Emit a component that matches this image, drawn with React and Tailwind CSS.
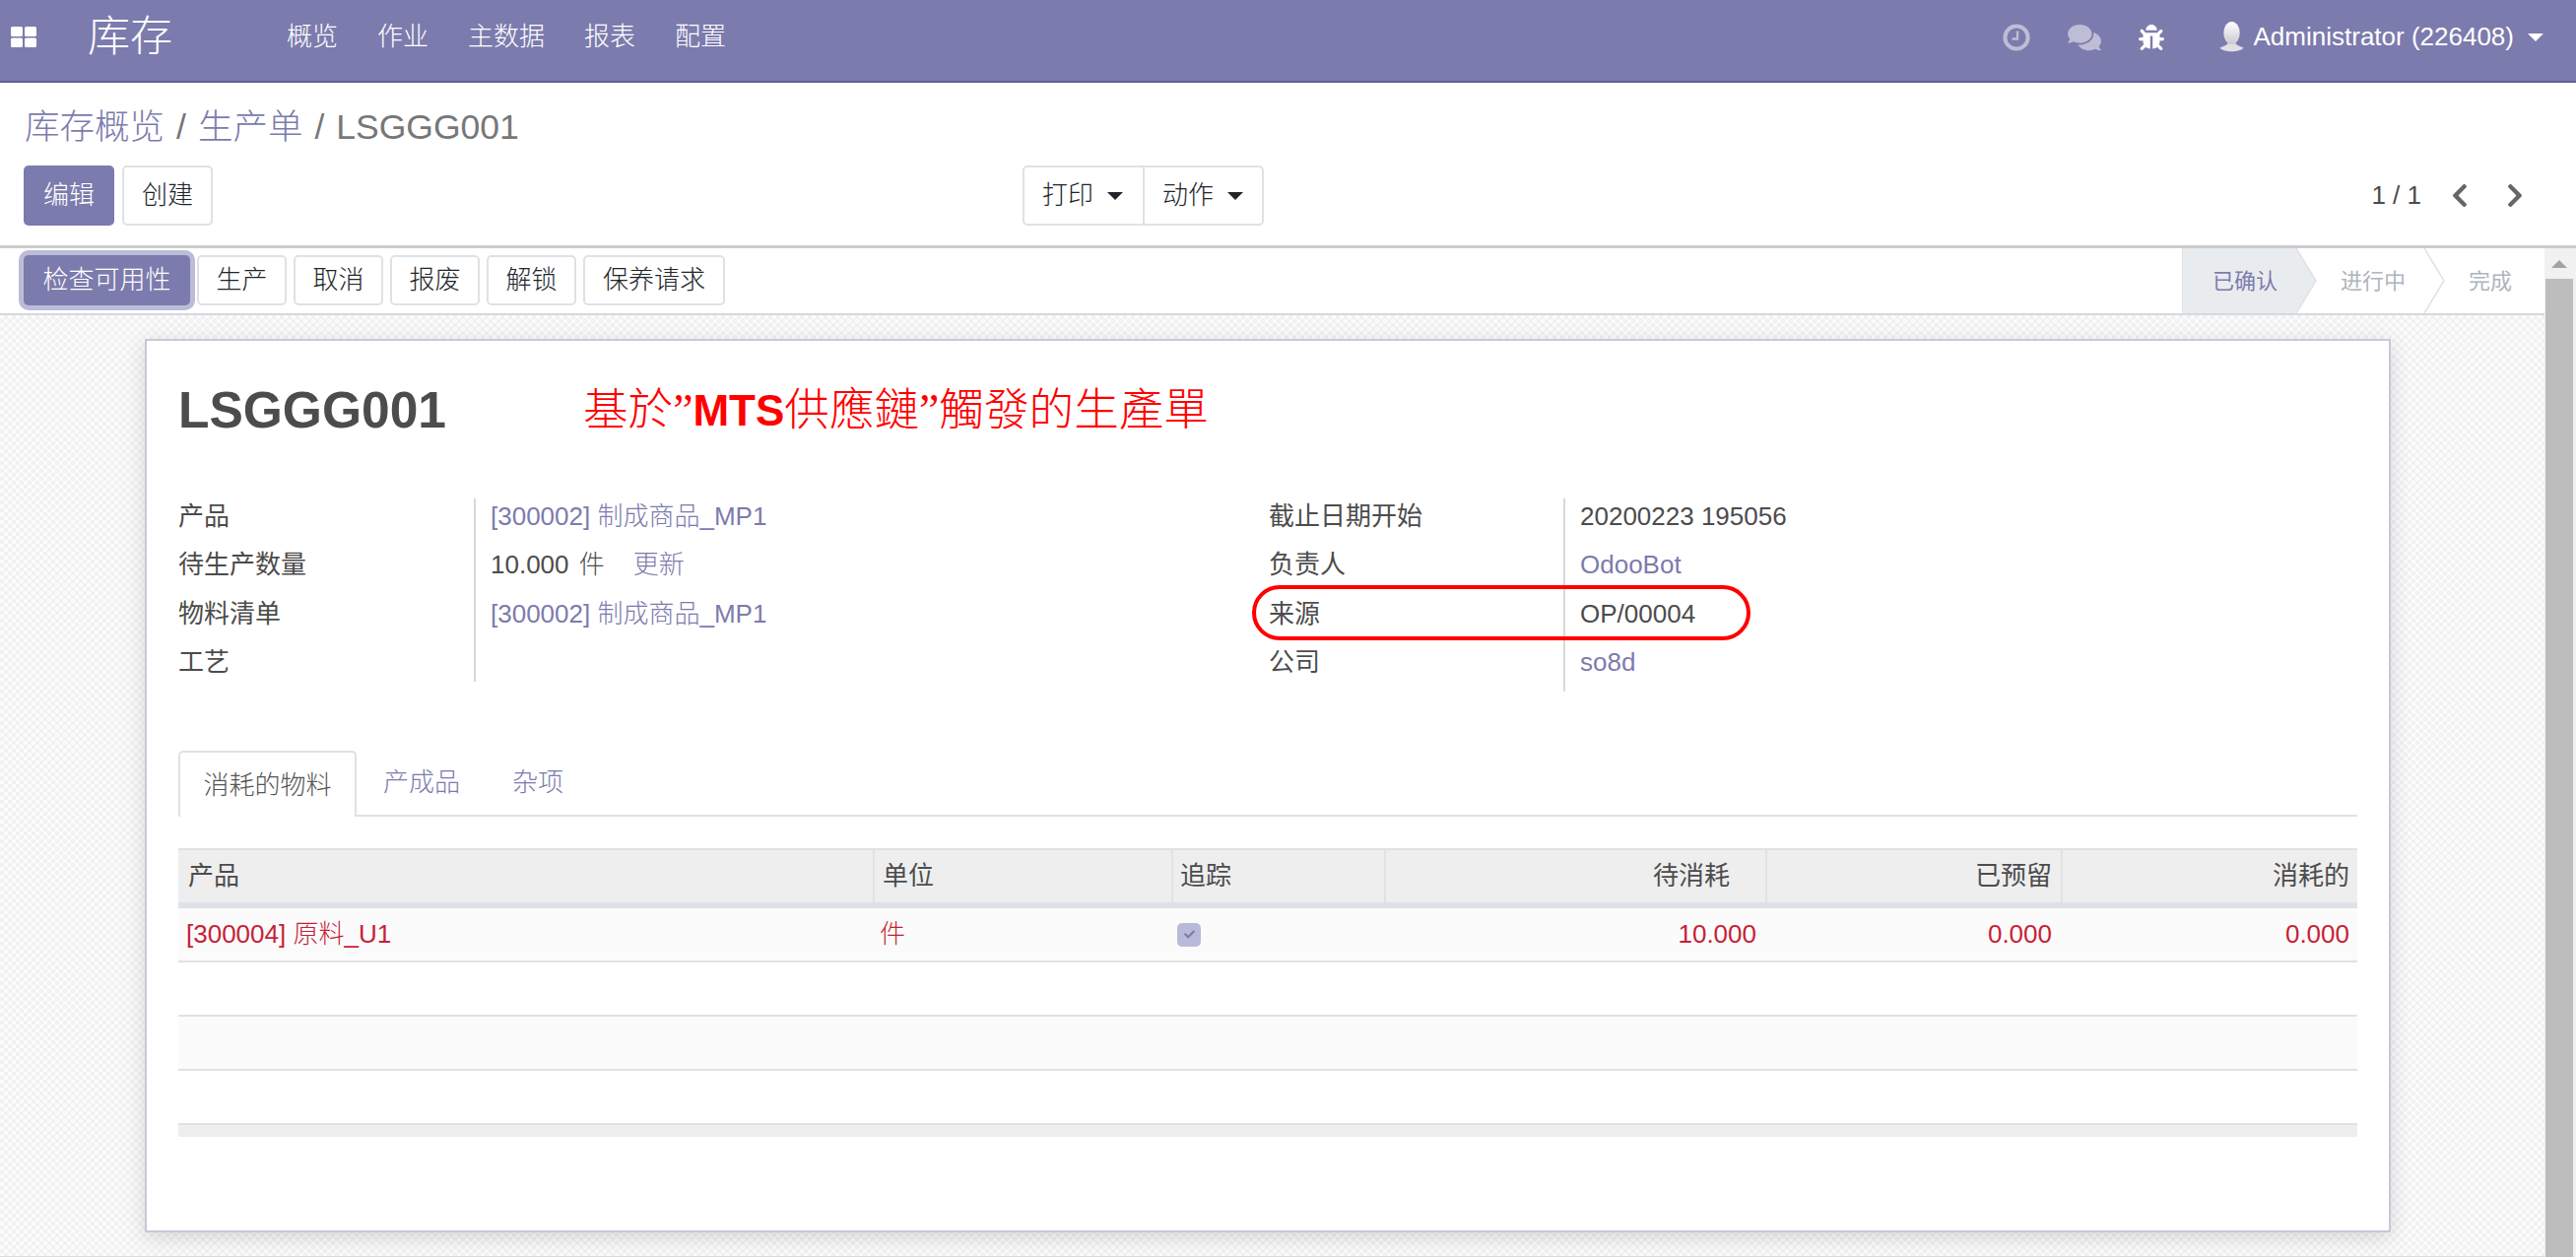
import React from "react";
import { FaComments, FaBug, FaChevronLeft, FaChevronRight, FaCheck } from "react-icons/fa";

const navItems = ["概览", "作业", "主数据", "报表", "配置"];
const tools = [["生产", "w-[91px]"], ["取消", "w-[91px]"], ["报废", "w-[91px]"], ["解锁", "w-[91px]"], ["保养请求", "w-[144px]"]];
const btn = "h-full flex items-center justify-center rounded-[5px] border-2 border-[#dee2e6] bg-white text-[#212529] font-light";
const row = "h-[36px] leading-[36px] shrink-0";
const cols = "grid grid-cols-[707px_303px_216px_387px_300px_299px]";
const link = "text-[#7c7bad] font-light";

function Caret({ color }) {
  return <span className={`inline-block w-0 h-0 border-x-[8px] border-t-[8px] border-x-transparent ${color}`} />;
}

function Avatar() {
  return (
    <svg width="25" height="31" viewBox="0 0 25 31" className="shrink-0">
      <defs>
        <linearGradient id="head" x1="0" y1="0" x2="0" y2="1">
          <stop offset="0" stopColor="#ffffff" />
          <stop offset="1" stopColor="#c9c9cf" />
        </linearGradient>
      </defs>
      <path d="M0.5 26.5 C5 24.5 8.5 24 9.5 20 h6 C16.5 24 20 24.5 24.5 26.5 C21 31.5 4 31.5 0.5 26.5 z" fill="#dfdfe4" />
      <ellipse cx="12.5" cy="11.5" rx="8.2" ry="11.5" fill="url(#head)" />
    </svg>
  );
}

function Clock() {
  return (
    <svg width="28" height="28" viewBox="0 0 28 28" className="shrink-0" fill="none" stroke="#bdbdd6">
      <circle cx="14" cy="14" r="11.6" strokeWidth="4" />
      <path d="M15 7.5 V15.5 H9.5" strokeWidth="2.4" />
    </svg>
  );
}

function Status() {
  return (
    <div className="flex h-[66px] shrink-0">
      <div className="relative w-[116px] bg-[#e9ecef] border-l border-[#dee2e6] flex items-center pl-[30px] text-[22px] text-[#7c7bad]">
        已确认
        <svg width="21" height="66" viewBox="0 0 21 66" className="absolute left-full top-0">
          <polygon points="0,0 20,33 0,66" fill="#e9ecef" />
          <polyline points="0,0 20,33 0,66" fill="none" stroke="#dee2e6" strokeWidth="1.5" />
        </svg>
      </div>
      <div className="relative w-[130px] flex items-center pl-[45px] text-[22px] text-[#adb5bd]">
        进行中
        <svg width="21" height="66" viewBox="0 0 21 66" className="absolute left-full top-0">
          <polyline points="0,0 20,33 0,66" fill="none" stroke="#dee2e6" strokeWidth="1.5" />
        </svg>
      </div>
      <div className="w-[122px] flex items-center pl-[45px] text-[22px] text-[#adb5bd]">完成</div>
    </div>
  );
}

function EmptyRow({ shade }) {
  return <div className={`h-[55px] border-b-2 border-[#dee2e6] ${shade}`} />;
}

export default function App() {
  return (
    <div className="h-screen w-full overflow-hidden flex flex-col bg-white text-[26px] text-[#4c4c4c] font-['Liberation_Sans','Noto_Sans_CJK_SC',sans-serif]">
      <header className="h-[84px] shrink-0 bg-[#7c7bad] border-b-2 border-[#5f5e97] flex items-center pb-[7px] text-white">
        <svg width="26" height="21" viewBox="0 0 26 21" className="ml-[11px] shrink-0" fill="#fff">
          <rect x="0" y="0" width="12" height="10" rx="1.5" />
          <rect x="14" y="0" width="12" height="10" rx="1.5" />
          <rect x="0" y="11.5" width="12" height="9.5" rx="1.5" />
          <rect x="14" y="11.5" width="12" height="9.5" rx="1.5" />
        </svg>
        <span className="ml-[52px] w-[87px] text-[43px] leading-none font-light">库存</span>
        <nav className="ml-[115px] flex gap-[40px] text-[26px] font-light">
          {navItems.map((n) => <span key={n}>{n}</span>)}
        </nav>
        <div className="ml-auto flex items-center pr-[33px]">
          <Clock />
          <FaComments className="ml-[38px] w-[34px] h-[30px] text-[#bdbdd6]" />
          <FaBug className="ml-[38px] w-[26px] h-[26px] text-white" />
          <span className="ml-[56px] flex items-center">
            <Avatar />
          </span>
          <span className="ml-[10px]">Administrator (226408)</span>
          <span className="ml-[14px] flex"><Caret color="border-t-white" /></span>
        </div>
      </header>

      <section className="h-[168px] shrink-0 border-b-[3px] border-[#cccccc] px-[24px]">
        <div className="flex items-center h-[36px] mt-[28px] text-[35.5px] text-[#777777]">
          <span className="text-[#7c7bad] font-light ml-[1px]">库存概览</span>
          <span className="mx-[12px]">/</span>
          <span className="text-[#7c7bad] font-light">生产单</span>
          <span className="mx-[12px]">/</span>
          <span>LSGGG001</span>
        </div>
        <div className="mt-[20px] h-[61px] flex items-center text-[26px]">
          <div className="w-[1014px] h-full flex gap-[8px]">
            <button className="w-[92px] h-full rounded-[5px] bg-[#7c7bad] text-white font-light">编辑</button>
            <button className={`${btn} w-[92px]`}>创建</button>
          </div>
          <div className="w-[245px] h-full flex rounded-[5px] border-2 border-[#dee2e6] text-[#212529] font-light">
            <button className="w-[122px] h-full flex items-center pl-[18px] gap-[14px] border-r-2 border-[#dee2e6]">打印 <Caret color="border-t-[#212529]" /></button>
            <button className="flex-1 h-full flex items-center pl-[18px] gap-[14px]">动作 <Caret color="border-t-[#212529]" /></button>
          </div>
          <div className="flex-1 h-full flex items-center justify-end pr-[28px]">
            <span>1 / 1</span>
            <FaChevronLeft className="ml-[29px] h-[27px] w-[20px] text-[#666666]" />
            <FaChevronRight className="ml-[36px] h-[27px] w-[20px] text-[#666666]" />
          </div>
        </div>
      </section>

      <div className="flex-1 min-h-0 flex">
        <main className="w-[2583px] shrink-0 flex flex-col">
          <div className="h-[68px] shrink-0 border-b-2 border-[#d6d9de] flex items-start justify-between pl-[24px]">
            <div className="flex gap-[7px] h-[51px] mt-[7px] text-[26px]">
              <button className="w-[169px] h-full rounded-[5px] bg-[#7c7bad] text-white font-light ring-[5px] ring-[#bcbcd8]">检查可用性</button>
              {tools.map(([t, w]) => <button key={t} className={`${btn} ${w}`}>{t}</button>)}
            </div>
            <Status />
          </div>

          <div className="flex-1 min-h-0 border-b border-[#dddddd] bg-[#f6f6f6] bg-[image:repeating-conic-gradient(#f1f1f1_0%_25%,#fbfbfb_0%_50%)] bg-[length:8px_8px]">
            <article className="ml-[147px] mt-[24px] w-[2280px] h-[907px] bg-white border-2 border-[#c9c8d8] px-[32px] shadow-[0_5px_20px_rgba(0,0,0,0.14)]">
              <div className="mt-[47px] h-[48px] flex items-center">
                <h1 className="w-[411px] shrink-0 text-[51.5px] leading-none font-bold">LSGGG001</h1>
                <p className="text-[45.6px] leading-none text-[#ff0000] whitespace-nowrap font-['Liberation_Serif','Noto_Sans_CJK_TC',serif] font-light">
                  基於”<span className="font-['Liberation_Sans',sans-serif] font-bold text-[44px]">MTS</span>供應鏈”觸發的生產單
                </p>
              </div>

              <div className="mt-[65px] grid grid-cols-[1107px_1fr]">
                <div className="flex items-start">
                  <div className="w-[300px] flex flex-col gap-[13.3px]">
                    {["产品", "待生产数量", "物料清单", "工艺"].map((l) => <div key={l} className={row}>{l}</div>)}
                  </div>
                  <div className="border-l-2 border-[#d9d9d9] pl-[15px] h-[186px] flex flex-col gap-[13.3px]">
                    <div className={`${row} ${link}`}>[300002] 制成商品_MP1</div>
                    <div className={`${row} font-light`}>10.000 <span className="ml-[3px]">件</span><span className={`ml-[29px] ${link}`}>更新</span></div>
                    <div className={`${row} ${link}`}>[300002] 制成商品_MP1</div>
                    <div className={row} />
                  </div>
                </div>
                <div className="flex items-start">
                  <div className="w-[299px] flex flex-col gap-[13.3px]">
                    <div className={row}>截止日期开始</div>
                    <div className={row}>负责人</div>
                    <div className={`${row} relative`}>
                      来源
                      <div className="absolute left-[-17px] top-[-11px] w-[506px] h-[56px] rounded-[28px] border-[4px] border-[#ff0000]" />
                    </div>
                    <div className={row}>公司</div>
                  </div>
                  <div className="border-l-2 border-[#d9d9d9] pl-[15px] h-[196px] flex flex-col gap-[13.3px]">
                    <div className={row}>20200223 195056</div>
                    <div className={`${row} text-[#7c7bad]`}>OdooBot</div>
                    <div className={row}>OP/00004</div>
                    <div className={`${row} text-[#7c7bad]`}>so8d</div>
                  </div>
                </div>
              </div>

              <div className="mt-[60px] h-[67px] border-b-2 border-[#dee2e6] flex">
                <div className="w-[181px] h-[67px] pt-[1px] rounded-t-[5px] border-2 border-b-0 border-[#dee2e6] bg-white flex items-center justify-center font-light text-[#555555]">消耗的物料</div>
                <div className="ml-[27px] flex items-center text-[#7c7bad] font-light">产成品</div>
                <div className="ml-[53px] flex items-center text-[#7c7bad] font-light">杂项</div>
              </div>

              <div className="mt-[32px] border-t-2 border-[#dee2e6]">
                <div className={`${cols} h-[59px] bg-[#eeeeee] border-b-[6px] border-[#dee2e6]`}>
                  <div className="border-r-2 border-[#e2e2e2] pl-[10px] flex items-center">产品</div>
                  <div className="border-r-2 border-[#e2e2e2] pl-[8px] flex items-center">单位</div>
                  <div className="border-r-2 border-[#e2e2e2] pl-[7px] flex items-center">追踪</div>
                  <div className="border-r-2 border-[#e2e2e2] pr-[36px] flex items-center justify-end">待消耗</div>
                  <div className="border-r-2 border-[#e2e2e2] pr-[9px] flex items-center justify-end">已预留</div>
                  <div className="pr-[8px] flex items-center justify-end">消耗的</div>
                </div>
                <div className={`${cols} h-[55px] bg-[#fbfbfb] border-b-2 border-[#dee2e6] text-[#c61f37]`}>
                  <div className="pl-[8px] flex items-center font-light">[300004] 原料_U1</div>
                  <div className="pl-[5px] flex items-center font-light">件</div>
                  <div className="pl-[4px] flex items-center">
                    <span className="w-[24px] h-[24px] rounded-[5px] bg-[#b9b9d9] flex items-center justify-center">
                      <FaCheck className="w-[11px] h-[11px] text-[#7c7bad]" />
                    </span>
                  </div>
                  <div className="pr-[11px] flex items-center justify-end">10.000</div>
                  <div className="pr-[11px] flex items-center justify-end">0.000</div>
                  <div className="pr-[8px] flex items-center justify-end">0.000</div>
                </div>
                <EmptyRow shade="bg-white" />
                <EmptyRow shade="bg-[#fbfbfb]" />
                <EmptyRow shade="bg-white" />
                <div className="h-[12px] bg-[#eeeeee]" />
              </div>
            </article>
          </div>
        </main>

        <aside className="w-[32px] shrink-0 bg-[#f1f1f1] flex flex-col">
          <div className="h-[31px] shrink-0 flex items-center justify-center pr-[3px]">
            <span className="w-0 h-0 border-x-[8px] border-b-[8px] border-x-transparent border-b-[#a3a3a3]" />
          </div>
          <div className="flex-1 ml-[1px] mr-[3px] bg-[#bdbdbd]" />
        </aside>
      </div>
    </div>
  );
}
